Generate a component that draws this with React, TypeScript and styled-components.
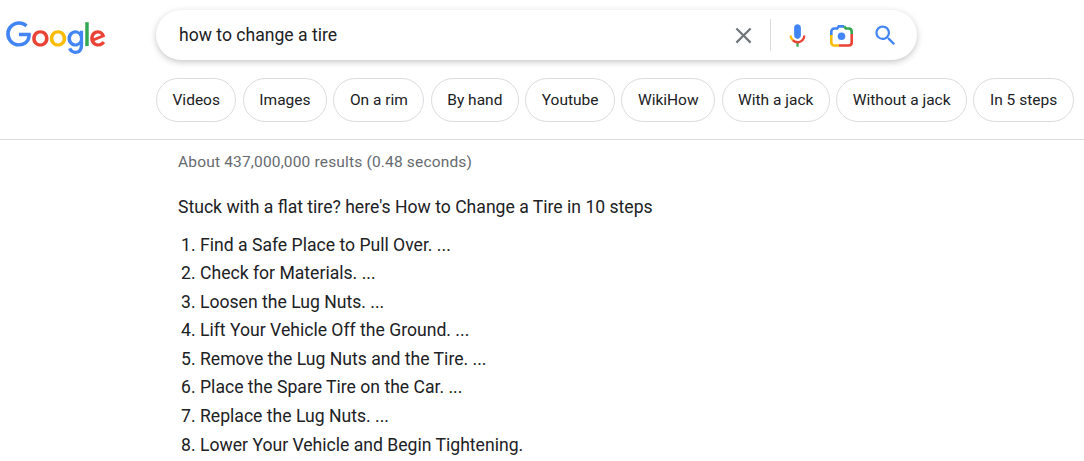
import { FC } from "react";
import styled, { createGlobalStyle } from "styled-components";

const GlobalStyle = createGlobalStyle`
  html, body {
    margin: 0;
    padding: 0;
    height: 100%;
    overflow: hidden;
    background: #fff;
  }
  body {
    font-family: Roboto, "Liberation Sans", Arial, sans-serif;
    color: #202124;
  }
`;

const Header = styled.header`
  border-bottom: 1px solid #dadce0;
  display: grid;
  grid-template-columns: 156px 1fr;
  grid-template-rows: 50px 44px;
  row-gap: 18px;
  padding-top: 10px;
  height: 129px;
`;

const LogoCell = styled.div`
  padding: 11px 0 0 6px;
`;

const Logo = styled.svg`
  display: block;
  width: 100px;
  height: 34px;
`;

const SearchBar = styled.div`
  width: 761px;
  height: 50px;
  border-radius: 25px;
  background: #fff;
  box-shadow: 0 2px 6px rgba(32, 33, 36, 0.26);
  display: flex;
  align-items: center;
  padding: 0 10px 0 23px;
  box-sizing: border-box;
`;

const Query = styled.div`
  flex: 1;
  font-size: 17.6px;
  color: #202124;
`;

const IconSlot = styled.div`
  width: 44px;
  height: 50px;
  display: flex;
  align-items: center;
  justify-content: center;
`;

const Divider = styled.div`
  width: 1px;
  height: 32px;
  background: #dadce0;
  margin: 0 4px 0 5px;
`;

const ChipRow = styled.div`
  grid-column: 2;
  display: flex;
  gap: 6.4px;
`;

const Chip = styled.div`
  height: 44px;
  box-sizing: border-box;
  border: 1px solid #dadce0;
  border-radius: 22px;
  padding: 0 15.5px;
  display: flex;
  align-items: center;
  font-size: 15.5px;
  white-space: nowrap;
  color: #202124;
`;

const Main = styled.main`
  padding: 13px 0 0 178px;
`;

const Stats = styled.div`
  font-size: 15.5px;
  letter-spacing: 0.17px;
  line-height: 18px;
  color: #666a6f;
`;

const Heading = styled.div`
  margin-top: 25px;
  font-size: 17.6px;
  line-height: 22px;
  color: #202124;
`;

const Steps = styled.ol`
  margin: 12.5px 0 0;
  padding: 0 0 0 22px;
  font-size: 17.6px;
  line-height: 28.6px;
  color: #202124;
`;

const chips = ["Videos", "Images", "On a rim", "By hand", "Youtube", "WikiHow", "With a jack", "Without a jack", "In 5 steps"];

const steps = [
  "Find a Safe Place to Pull Over. ...",
  "Check for Materials. ...",
  "Loosen the Lug Nuts. ...",
  "Lift Your Vehicle Off the Ground. ...",
  "Remove the Lug Nuts and the Tire. ...",
  "Place the Spare Tire on the Car. ...",
  "Replace the Lug Nuts. ...",
  "Lower Your Vehicle and Begin Tightening.",
];

const GoogleLogo: FC = () => (
  <Logo viewBox="0 0 272 92">
    <path fill="#EA4335" d="M115.75 47.18c0 12.77-9.99 22.18-22.25 22.18s-22.25-9.41-22.25-22.18C71.25 34.32 81.24 25 93.5 25s22.25 9.32 22.25 22.18zm-9.74 0c0-7.98-5.79-13.44-12.51-13.44S80.99 39.2 80.99 47.18c0 7.9 5.79 13.44 12.51 13.44s12.51-5.55 12.51-13.44z" />
    <path fill="#FBBC05" d="M163.75 47.18c0 12.77-9.99 22.18-22.25 22.18s-22.25-9.41-22.25-22.18c0-12.85 9.99-22.18 22.25-22.18s22.25 9.32 22.25 22.18zm-9.74 0c0-7.98-5.79-13.44-12.51-13.44s-12.51 5.46-12.51 13.44c0 7.9 5.79 13.44 12.51 13.44s12.51-5.55 12.51-13.44z" />
    <path fill="#4285F4" d="M209.75 26.34v39.82c0 16.38-9.66 23.07-21.08 23.07-10.75 0-17.22-7.19-19.66-13.07l8.48-3.53c1.51 3.61 5.21 7.87 11.17 7.87 7.31 0 11.84-4.51 11.84-13v-3.19h-.34c-2.18 2.69-6.38 5.04-11.68 5.04-11.09 0-21.25-9.66-21.25-22.09 0-12.52 10.16-22.26 21.25-22.26 5.29 0 9.49 2.35 11.68 4.96h.34v-3.61h9.25zm-8.56 20.92c0-7.81-5.21-13.52-11.84-13.52-6.72 0-12.35 5.71-12.35 13.52 0 7.73 5.63 13.36 12.35 13.36 6.63 0 11.84-5.63 11.84-13.36z" />
    <path fill="#34A853" d="M225 3v65h-9.5V3h9.5z" />
    <path fill="#EA4335" d="M262.02 54.48l7.56 5.04c-2.44 3.61-8.32 9.83-18.48 9.83-12.6 0-22.01-9.74-22.01-22.18 0-13.19 9.49-22.18 20.92-22.18 11.51 0 17.14 9.16 18.98 14.11l1.01 2.52-29.65 12.28c2.27 4.45 5.8 6.72 10.75 6.72 4.96 0 8.4-2.44 10.92-6.14zm-23.27-7.98l19.82-8.23c-1.09-2.77-4.37-4.7-8.23-4.7-4.95 0-11.84 4.37-11.59 12.93z" />
    <path fill="#4285F4" d="M35.29 41.41V32H67c.31 1.64.47 3.58.47 5.68 0 7.06-1.93 15.79-8.15 22.01-6.05 6.3-13.78 9.66-24.02 9.66C16.32 69.35.36 53.89.36 34.91.36 15.93 16.32.47 35.3.47c10.5 0 17.98 4.12 23.6 9.49l-6.64 6.64c-4.03-3.78-9.49-6.72-16.97-6.72-13.86 0-24.7 11.17-24.7 25.03 0 13.86 10.84 25.03 24.7 25.03 8.99 0 14.11-3.61 17.39-6.89 2.66-2.66 4.41-6.46 5.1-11.65l-22.49.01z" />
  </Logo>
);

const ClearIcon: FC = () => (
  <svg width="27" height="27" viewBox="0 0 24 24">
    <path fill="#70757a" d="M19 6.41 17.59 5 12 10.59 6.41 5 5 6.41 10.59 12 5 17.59 6.41 19 12 13.41 17.59 19 19 17.59 13.41 12z" />
  </svg>
);

const MicIcon: FC = () => (
  <svg width="27" height="27" viewBox="0 0 24 24">
    <path fill="#4285f4" d="m12 15c1.66 0 3-1.31 3-2.97v-7.02c0-1.66-1.34-3.01-3-3.01s-3 1.34-3 3.01v7.02c0 1.66 1.34 2.97 3 2.97z" />
    <path fill="#34a853" d="m11 18.08h2v3.92h-2z" />
    <path fill="#fbbc05" d="m7.05 16.87c-1.27-1.33-2.05-2.83-2.05-4.87h2c0 1.45 0.56 2.42 1.47 3.38v0.32l-1.15 1.18z" />
    <path fill="#ea4335" d="m12 16.93a4.97 5.25 0 0 1 -3.54 -1.55l-1.41 1.49c1.26 1.34 3.02 2.13 4.95 2.13 3.87 0 6.99-2.92 6.99-7h-1.99c0 2.92-2.24 4.93-5 4.93z" />
  </svg>
);

const CameraIcon: FC = () => (
  <svg width="27" height="27" viewBox="0 0 27 27" fill="none" strokeWidth="2.6">
    <path stroke="#4285f4" d="M3.3 13V9.5c0-1.8 1.3-3 3-3h2.9l1.6-2.1h5.4" />
    <path stroke="#34a853" d="M16.2 4.4l1.6 2.1h2.9c1.7 0 3 1.2 3 3V12" />
    <path stroke="#ea4335" d="M23.7 12v8.5c0 1.8-1.3 3-3 3H11" />
    <path stroke="#fbbc05" d="M11 23.5H6.3c-1.7 0-3-1.2-3-3V13" />
    <circle cx="13.5" cy="14.3" r="3.8" fill="#4285f4" />
  </svg>
);

const SearchIcon: FC = () => (
  <svg width="27" height="27" viewBox="0 0 24 24">
    <path fill="#4285f4" d="M15.5 14h-.79l-.28-.27A6.471 6.471 0 0 0 16 9.5 6.5 6.5 0 1 0 9.5 16c1.61 0 3.09-.59 4.23-1.57l.27.28v.79l5 4.99L20.49 19l-4.99-5zm-6 0C7.01 14 5 11.99 5 9.5S7.01 5 9.5 5 14 7.01 14 9.5 11.99 14 9.5 14z" />
  </svg>
);

const App: FC<{}> = () => {
  return (
    <>
      <GlobalStyle />
      <Header>
        <LogoCell>
          <GoogleLogo />
        </LogoCell>
        <SearchBar>
          <Query>how to change a tire</Query>
          <IconSlot><ClearIcon /></IconSlot>
          <Divider />
          <IconSlot><MicIcon /></IconSlot>
          <IconSlot><CameraIcon /></IconSlot>
          <IconSlot><SearchIcon /></IconSlot>
        </SearchBar>
        <ChipRow>
          {chips.map((chip) => (
            <Chip key={chip}>{chip}</Chip>
          ))}
        </ChipRow>
      </Header>
      <Main>
        <Stats>About 437,000,000 results (0.48 seconds)</Stats>
        <Heading>Stuck with a flat tire? here's How to Change a Tire in 10 steps</Heading>
        <Steps>
          {steps.map((step) => (
            <li key={step}>{step}</li>
          ))}
        </Steps>
      </Main>
    </>
  );
};

export default App;
